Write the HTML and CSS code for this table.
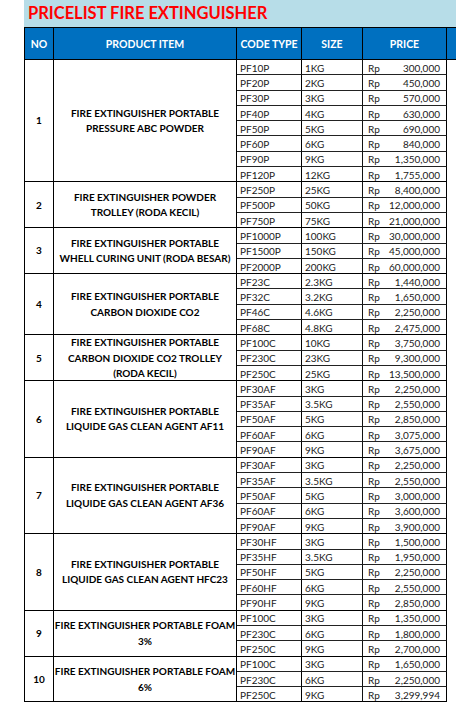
FILE: index.html
```html
<!DOCTYPE html>
<html>
<head>
<meta charset="utf-8">
<link rel="stylesheet" href="styles.css">
</head>
<body>
<div class="sheet">
  <div class="title">PRICELIST FIRE EXTINGUISHER</div>
  <div class="grid">
    <div class="hd">NO</div>
    <div class="hd">PRODUCT ITEM</div>
    <div class="hd">CODE TYPE</div>
    <div class="hd">SIZE</div>
    <div class="hd">PRICE</div>
    <div class="hd extra"></div>

    <!-- group 1 -->
    <div class="no g8">1</div>
    <div class="prod g8"><span>FIRE EXTINGUISHER PORTABLE</span><span>PRESSURE ABC POWDER</span></div>
    <div class="c">PF10P</div><div class="s">1KG</div><div class="p"><span>Rp</span><span>300,000</span></div>
    <div class="c">PF20P</div><div class="s">2KG</div><div class="p"><span>Rp</span><span>450,000</span></div>
    <div class="c">PF30P</div><div class="s">3KG</div><div class="p"><span>Rp</span><span>570,000</span></div>
    <div class="c">PF40P</div><div class="s">4KG</div><div class="p"><span>Rp</span><span>630,000</span></div>
    <div class="c">PF50P</div><div class="s">5KG</div><div class="p"><span>Rp</span><span>690,000</span></div>
    <div class="c">PF60P</div><div class="s">6KG</div><div class="p"><span>Rp</span><span>840,000</span></div>
    <div class="c">PF90P</div><div class="s">9KG</div><div class="p"><span>Rp</span><span>1,350,000</span></div>
    <div class="c last">PF120P</div><div class="s last">12KG</div><div class="p last"><span>Rp</span><span>1,755,000</span></div>

    <!-- group 2 -->
    <div class="no g3">2</div>
    <div class="prod g3"><span>FIRE EXTINGUISHER POWDER</span><span>TROLLEY (RODA KECIL)</span></div>
    <div class="c">PF250P</div><div class="s">25KG</div><div class="p"><span>Rp</span><span>8,400,000</span></div>
    <div class="c">PF500P</div><div class="s">50KG</div><div class="p"><span>Rp</span><span>12,000,000</span></div>
    <div class="c last">PF750P</div><div class="s last">75KG</div><div class="p last"><span>Rp</span><span>21,000,000</span></div>

    <!-- group 3 -->
    <div class="no g3">3</div>
    <div class="prod g3"><span>FIRE EXTINGUISHER PORTABLE</span><span>WHELL CURING UNIT (RODA BESAR)</span></div>
    <div class="c">PF1000P</div><div class="s">100KG</div><div class="p"><span>Rp</span><span>30,000,000</span></div>
    <div class="c">PF1500P</div><div class="s">150KG</div><div class="p"><span>Rp</span><span>45,000,000</span></div>
    <div class="c last">PF2000P</div><div class="s last">200KG</div><div class="p last"><span>Rp</span><span>60,000,000</span></div>

    <!-- group 4 -->
    <div class="no g4">4</div>
    <div class="prod g4"><span>FIRE EXTINGUISHER PORTABLE</span><span>CARBON DIOXIDE CO2</span></div>
    <div class="c">PF23C</div><div class="s">2.3KG</div><div class="p"><span>Rp</span><span>1,440,000</span></div>
    <div class="c">PF32C</div><div class="s">3.2KG</div><div class="p"><span>Rp</span><span>1,650,000</span></div>
    <div class="c">PF46C</div><div class="s">4.6KG</div><div class="p"><span>Rp</span><span>2,250,000</span></div>
    <div class="c last">PF68C</div><div class="s last">4.8KG</div><div class="p last"><span>Rp</span><span>2,475,000</span></div>

    <!-- group 5 -->
    <div class="no g3">5</div>
    <div class="prod g3"><span>FIRE EXTINGUISHER PORTABLE</span><span>CARBON DIOXIDE CO2 TROLLEY</span><span>(RODA KECIL)</span></div>
    <div class="c">PF100C</div><div class="s">10KG</div><div class="p"><span>Rp</span><span>3,750,000</span></div>
    <div class="c">PF230C</div><div class="s">23KG</div><div class="p"><span>Rp</span><span>9,300,000</span></div>
    <div class="c last">PF250C</div><div class="s last">25KG</div><div class="p last"><span>Rp</span><span>13,500,000</span></div>

    <!-- group 6 -->
    <div class="no g5">6</div>
    <div class="prod g5"><span>FIRE EXTINGUISHER PORTABLE</span><span>LIQUIDE GAS CLEAN AGENT AF11</span></div>
    <div class="c">PF30AF</div><div class="s">3KG</div><div class="p"><span>Rp</span><span>2,250,000</span></div>
    <div class="c">PF35AF</div><div class="s">3.5KG</div><div class="p"><span>Rp</span><span>2,550,000</span></div>
    <div class="c">PF50AF</div><div class="s">5KG</div><div class="p"><span>Rp</span><span>2,850,000</span></div>
    <div class="c">PF60AF</div><div class="s">6KG</div><div class="p"><span>Rp</span><span>3,075,000</span></div>
    <div class="c last">PF90AF</div><div class="s last">9KG</div><div class="p last"><span>Rp</span><span>3,675,000</span></div>

    <!-- group 7 -->
    <div class="no g5">7</div>
    <div class="prod g5"><span>FIRE EXTINGUISHER PORTABLE</span><span>LIQUIDE GAS CLEAN AGENT AF36</span></div>
    <div class="c">PF30AF</div><div class="s">3KG</div><div class="p"><span>Rp</span><span>2,250,000</span></div>
    <div class="c">PF35AF</div><div class="s">3.5KG</div><div class="p"><span>Rp</span><span>2,550,000</span></div>
    <div class="c">PF50AF</div><div class="s">5KG</div><div class="p"><span>Rp</span><span>3,000,000</span></div>
    <div class="c">PF60AF</div><div class="s">6KG</div><div class="p"><span>Rp</span><span>3,600,000</span></div>
    <div class="c last">PF90AF</div><div class="s last">9KG</div><div class="p last"><span>Rp</span><span>3,900,000</span></div>

    <!-- group 8 -->
    <div class="no g5">8</div>
    <div class="prod g5"><span>FIRE EXTINGUISHER PORTABLE</span><span>LIQUIDE GAS CLEAN AGENT HFC23</span></div>
    <div class="c">PF30HF</div><div class="s">3KG</div><div class="p"><span>Rp</span><span>1,500,000</span></div>
    <div class="c">PF35HF</div><div class="s">3.5KG</div><div class="p"><span>Rp</span><span>1,950,000</span></div>
    <div class="c">PF50HF</div><div class="s">5KG</div><div class="p"><span>Rp</span><span>2,250,000</span></div>
    <div class="c">PF60HF</div><div class="s">6KG</div><div class="p"><span>Rp</span><span>2,550,000</span></div>
    <div class="c last">PF90HF</div><div class="s last">9KG</div><div class="p last"><span>Rp</span><span>2,850,000</span></div>

    <!-- group 9 -->
    <div class="no g3">9</div>
    <div class="prod g3"><span>FIRE EXTINGUISHER PORTABLE FOAM</span><span>3%</span></div>
    <div class="c">PF100C</div><div class="s">3KG</div><div class="p"><span>Rp</span><span>1,350,000</span></div>
    <div class="c">PF230C</div><div class="s">6KG</div><div class="p"><span>Rp</span><span>1,800,000</span></div>
    <div class="c last">PF250C</div><div class="s last">9KG</div><div class="p last"><span>Rp</span><span>2,700,000</span></div>

    <!-- group 10 -->
    <div class="no g3">10</div>
    <div class="prod g3"><span>FIRE EXTINGUISHER PORTABLE FOAM</span><span>6%</span></div>
    <div class="c">PF100C</div><div class="s">3KG</div><div class="p"><span>Rp</span><span>1,650,000</span></div>
    <div class="c">PF230C</div><div class="s">6KG</div><div class="p"><span>Rp</span><span>2,250,000</span></div>
    <div class="c last">PF250C</div><div class="s last">9KG</div><div class="p last"><span>Rp</span><span>3,299,994</span></div>
  </div>
</div>
</body>
</html>
```

FILE: styles.css
```css
html, body {
  margin: 0;
  padding: 0;
  background: #ffffff;
  overflow: hidden;
}
* { box-sizing: border-box; }

.sheet {
  width: 456px;
  height: 714px;
  padding-left: 24px;
  overflow: hidden;
  font-family: Lato, "Liberation Sans", sans-serif;
  color: #000;
}

.title {
  width: 470px;
  height: 27px;
  background: #b7dde8;
  color: #ff0000;
  font-weight: 700;
  font-size: 16.5px;
  line-height: 27px;
  padding-left: 4px;
  white-space: nowrap;
}

.grid {
  display: grid;
  grid-template-columns: 29px 183px 65px 61px 84px 40px;
  grid-template-rows: 32px repeat(42, 15.31px);
  border-top: 1px solid #000;
  border-left: 1.5px solid #000;
  width: 462px;
}

.grid > div {
  border-right: 1px solid #111;
  border-bottom: 1px solid #222;
  overflow: hidden;
  white-space: nowrap;
}

.hd {
  background: #0070c0;
  color: #ffffff;
  font-weight: 700;
  font-size: 10.5px;
  display: flex;
  align-items: center;
  justify-content: center;
  border-right: 1.5px solid #000 !important;
  border-bottom: 1.5px solid #000 !important;
}
.hd.extra { border-right: none !important; }

.no, .prod {
  font-weight: 700;
  font-size: 10px;
  display: flex;
  flex-direction: column;
  align-items: center;
  justify-content: center;
  line-height: 15.5px;
  padding-top: 1px;
  border-bottom: 1.5px solid #000 !important;
  border-right: 1.5px solid #000 !important;
}
.no { grid-column: 1; }
.prod { grid-column: 2; }
.prod span { display: block; text-align: center; }

.g3 { grid-row: span 3; }
.g4 { grid-row: span 4; }
.g5 { grid-row: span 5; }
.g8 { grid-row: span 8; }

.c, .s, .p {
  font-size: 10px;
  line-height: 14px;
  display: flex;
  align-items: center;
  padding-left: 3px;
  padding-top: 1px;
  color: #1a1a1a;
}
.c { grid-column: 3; border-right: 1.5px solid #000 !important; }
.s { grid-column: 4; }
.p {
  grid-column: 5;
  justify-content: space-between;
  padding: 1px 6px 0 5px;
  border-right: 1.5px solid #000 !important;
}
.last { border-bottom: 1.5px solid #000 !important; }
```
